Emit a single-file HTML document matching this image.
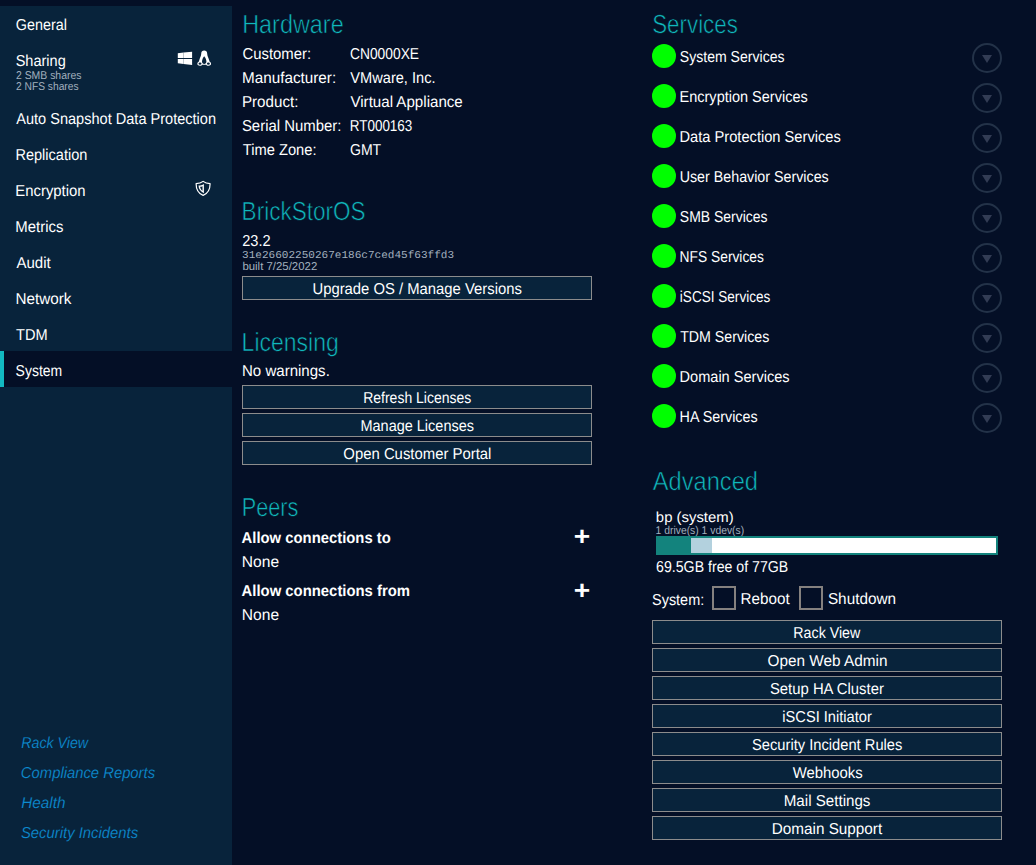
<!DOCTYPE html>
<html lang="en"><head><meta charset="utf-8"><title>BrickStor SP Manager - System</title>
<style>
html,body{margin:0;padding:0}
body{width:1036px;height:865px;background:#040f26;overflow:hidden;position:relative;font-family:'Liberation Sans', sans-serif;color:#ffffff}
nav,main,section,ul,li,h2,p,dl,dt,dd{display:block;margin:0;padding:0;position:static;list-style:none}
.t{position:absolute;left:0;top:0;display:block;text-rendering:geometricPrecision;line-height:1;white-space:pre;transform-origin:0 0;margin:0;padding:0;font-weight:400;font-style:normal;text-decoration:none}
.nav{color:#ffffff}
.sub{color:#a3b1bf}
.link{color:#0d8bd0;font-style:italic;-webkit-text-stroke:0.15px #08233b}
.h{color:#10b8be;-webkit-text-stroke:0.6px #040f26}
.txt{color:#ffffff}
.b{color:#ffffff;font-weight:700}
.plus{color:#ffffff;font-weight:700}
.mono{color:#a3b1bf;font-family:'Liberation Mono', monospace}
#side{position:absolute;left:0;top:6px;width:232px;height:859px;background:#08233b}
#sel{position:absolute;left:0;top:351px;width:232px;height:36px;background:#040f26}
#sel i{position:absolute;left:0;top:0;width:4px;height:36px;background:#12b9c1}
button.btn{position:absolute;box-sizing:border-box;height:24px;width:350px;margin:0;padding:0;border:1px solid #8c8c8c;border-radius:0;background:#08233b;font:inherit;color:inherit;overflow:visible;appearance:none;-webkit-appearance:none}
.dot{position:absolute;width:24px;height:24px;border-radius:50%;background:#00ff00}
.ddn{position:absolute;width:30px;height:30px;box-sizing:border-box;border:2px solid #233248;border-radius:50%}
.ddn i{position:absolute;left:8.2px;top:10px;width:0;height:0;border-left:5px solid transparent;border-right:5px solid transparent;border-top:8px solid #323c54}
.chk{position:absolute;width:24px;height:24px;box-sizing:border-box;border:2px solid #85817f;background:#040f26}
#bar{position:absolute;left:656px;top:536px;width:342px;height:19px;box-sizing:border-box;border:2px solid #13837d;background:#fff}
#bar b{position:absolute;left:0;top:0;height:15px;width:33px;background:#13837d}
#bar u{position:absolute;left:33px;top:0;height:15px;width:21px;background:#b3d1de}
svg{position:absolute;overflow:visible}
</style></head>
<body>
<nav>
<div id="side"></div>
<div id="sel"><i></i></div>
<svg id="icons" style="left:0;top:0" width="232" height="220" viewBox="0 0 232 220">
<g id="win" fill="#fff"><path d="M177.8 53.2 L183.55 52.6 V57.95 H177.8 Z"/><path d="M183.55 52.6 L192.1 51.8 V57.95 H183.55 Z"/><path d="M177.8 58.9 H183.55 V63.9 L177.8 63.2 Z"/><path d="M183.55 58.9 H192.1 V65 L183.55 63.95 Z"/></g>
<g id="tux"><path fill="#fff" d="M204.2 50.6 C206 50.6 207.2 51.8 207.2 53.8 C207.2 55.8 208.4 57.6 209.1 60 L209.5 61.6 C211.2 62.4 211.4 64.2 210.6 65 C209.6 66 207.4 65.9 206.6 65.2 L206.2 64.7 H202.2 L201.8 65.2 C201 65.9 198.8 66 197.8 65 C197 64.2 197.2 62.4 198.9 61.6 L199.3 60 C200 57.6 201.2 55.8 201.2 53.8 C201.2 51.8 202.4 50.6 204.2 50.6 Z"/>
<path fill="#08233b" d="M204.2 56.2 C205.5 57.5 206.4 59.8 206.4 61.6 C206.4 63.2 205.5 64.1 204.2 64.1 C202.9 64.1 202 63.2 202 61.6 C202 59.8 202.9 57.5 204.2 56.2 Z"/>
<ellipse fill="#08233b" cx="200" cy="63.7" rx="1.5" ry="1.1"/><ellipse fill="#08233b" cx="208.4" cy="63.7" rx="1.5" ry="1.1"/></g>
<g id="shield"><path fill="none" stroke="#fff" stroke-width="1.2" stroke-linejoin="round" d="M203.1 181.4 C204.9 182.9 207.7 183.7 210.1 183.7 C210.1 189.2 207.9 193.4 203.1 195.4 C198.3 193.4 196.1 189.2 196.1 183.7 C198.5 183.7 201.3 182.9 203.1 181.4 Z"/>
<path fill="#fff" fill-rule="evenodd" d="M203.9 184 V193.2 C200.6 191.6 198.6 189 198.5 185.6 C200.3 185.5 202.4 185 203.9 184 Z M202.5 186.2 C201.8 186.5 200.9 186.7 200.1 186.8 C200.3 188.4 201.1 189.8 202.5 190.8 Z"/></g>
</svg>
<ul>
<li><a class="t nav" href="#" style="font-size:15.8px;transform:translate(15.76px,18.05px) scaleX(0.9094)">General</a></li>
<li><a class="t nav" href="#" style="font-size:15.8px;transform:translate(15.65px,54.05px) scaleX(0.9194)">Sharing</a><span class="t sub" style="font-size:11.4px;transform:translate(15.98px,71.17px) scaleX(0.9146)">2 SMB shares</span><span class="t sub" style="font-size:11.4px;transform:translate(16.00px,82.17px) scaleX(0.8986)">2 NFS shares</span></li>
<li><a class="t nav" href="#" style="font-size:15.8px;transform:translate(16.26px,112.05px) scaleX(0.9209)">Auto Snapshot Data Protection</a></li>
<li><a class="t nav" href="#" style="font-size:15.8px;transform:translate(15.39px,148.05px) scaleX(0.9208)">Replication</a></li>
<li><a class="t nav" href="#" style="font-size:15.8px;transform:translate(15.30px,184.05px) scaleX(0.9415)">Encryption</a></li>
<li><a class="t nav" href="#" style="font-size:15.8px;transform:translate(15.30px,220.05px) scaleX(0.9443)">Metrics</a></li>
<li><a class="t nav" href="#" style="font-size:15.8px;transform:translate(16.45px,256.05px) scaleX(0.9518)">Audit</a></li>
<li><a class="t nav" href="#" style="font-size:15.8px;transform:translate(15.39px,292.05px) scaleX(0.9659)">Network</a></li>
<li><a class="t nav" href="#" style="font-size:15.8px;transform:translate(16.04px,328.05px) scaleX(0.9231)">TDM</a></li>
<li><a class="t nav" href="#" style="font-size:15.8px;transform:translate(15.61px,364.05px) scaleX(0.8852)">System</a></li>
</ul>
<ul>
<li><a class="t link" href="#" style="font-size:15.8px;transform:translate(21.29px,736.05px) scaleX(0.8983)">Rack View</a></li>
<li><a class="t link" href="#" style="font-size:15.8px;transform:translate(20.87px,766.05px) scaleX(0.9376)">Compliance Reports</a></li>
<li><a class="t link" href="#" style="font-size:15.8px;transform:translate(21.19px,796.05px) scaleX(0.9688)">Health</a></li>
<li><a class="t link" href="#" style="font-size:15.8px;transform:translate(20.95px,826.05px) scaleX(0.9397)">Security Incidents</a></li>
</ul>
</nav>
<main>
<section id="hardware"><h2 class="t h" style="font-size:26.2px;transform:translate(242.17px,11.00px) scaleX(0.8943)">Hardware</h2>
<dl>
<dt class="t txt" style="font-size:15.8px;transform:translate(242.48px,47.05px) scaleX(0.9416)">Customer:</dt><dd class="t txt" style="font-size:15.8px;transform:translate(349.99px,47.05px) scaleX(0.8742)">CN0000XE</dd>
<dt class="t txt" style="font-size:15.8px;transform:translate(241.95px,71.05px) scaleX(0.9670)">Manufacturer:</dt><dd class="t txt" style="font-size:15.8px;transform:translate(350.31px,71.05px) scaleX(0.9243)">VMware, Inc.</dd>
<dt class="t txt" style="font-size:15.8px;transform:translate(241.97px,95.05px) scaleX(0.9592)">Product:</dt><dd class="t txt" style="font-size:15.8px;transform:translate(350.43px,95.05px) scaleX(0.9570)">Virtual Appliance</dd>
<dt class="t txt" style="font-size:15.8px;transform:translate(241.92px,119.05px) scaleX(0.9443)">Serial Number:</dt><dd class="t txt" style="font-size:15.8px;transform:translate(349.68px,119.05px) scaleX(0.8528)">RT000163</dd>
<dt class="t txt" style="font-size:15.8px;transform:translate(242.75px,143.05px) scaleX(0.9297)">Time Zone:</dt><dd class="t txt" style="font-size:15.8px;transform:translate(349.95px,143.05px) scaleX(0.8909)">GMT</dd>
</dl></section>
<section id="os"><h2 class="t h" style="font-size:26.2px;transform:translate(241.59px,198.00px) scaleX(0.8608)">BrickStorOS</h2>
<p class="t txt" style="font-size:15.8px;transform:translate(242.19px,234.05px) scaleX(0.9225)">23.2</p><p class="t mono" style="font-size:10.6px;transform:translate(242.03px,251.21px) scaleX(1.0421)">31e26602250267e186c7ced45f63ffd3</p><p class="t sub" style="font-size:11.4px;transform:translate(242.40px,262.17px) scaleX(1.0012)">built 7/25/2022</p>
<button type="button" class="btn" style="left:242px;top:276px"><span class="t txt" style="font-size:15.8px;transform:translate(69.43px,5.05px) scaleX(0.9389)">Upgrade OS / Manage Versions</span></button></section>
<section id="licensing"><h2 class="t h" style="font-size:26.2px;transform:translate(241.61px,329.00px) scaleX(0.8785)">Licensing</h2><p class="t txt" style="font-size:15.8px;transform:translate(241.99px,364.05px) scaleX(0.9526)">No warnings.</p>
<button type="button" class="btn" style="left:242px;top:385px"><span class="t txt" style="font-size:15.8px;transform:translate(120.13px,5.05px) scaleX(0.8866)">Refresh Licenses</span></button>
<button type="button" class="btn" style="left:242px;top:413px"><span class="t txt" style="font-size:15.8px;transform:translate(117.46px,5.05px) scaleX(0.9167)">Manage Licenses</span></button>
<button type="button" class="btn" style="left:242px;top:441px"><span class="t txt" style="font-size:15.8px;transform:translate(100.33px,5.05px) scaleX(0.9422)">Open Customer Portal</span></button>
</section>
<section id="peers"><h2 class="t h" style="font-size:26.2px;transform:translate(241.72px,494.00px) scaleX(0.8293)">Peers</h2>
<p class="t b" style="font-size:15.8px;transform:translate(241.57px,531.00px) scaleX(0.9393)">Allow connections to</p><span class="t plus" style="font-size:26px;transform:translate(573.73px,522.91px) scaleX(1.0838)">+</span><p class="t txt" style="font-size:15.8px;transform:translate(241.85px,555.05px) scaleX(0.9861)">None</p>
<p class="t b" style="font-size:15.8px;transform:translate(241.57px,584.00px) scaleX(0.9410)">Allow connections from</p><span class="t plus" style="font-size:26px;transform:translate(573.73px,577.01px) scaleX(1.0838)">+</span><p class="t txt" style="font-size:15.8px;transform:translate(241.85px,608.05px) scaleX(0.9861)">None</p>
</section>
<section id="services"><h2 class="t h" style="font-size:26.2px;transform:translate(652.16px,11.00px) scaleX(0.8539)">Services</h2>
<ul>
<li><div class="dot" style="left:651.8px;top:44px"></div><span class="t txt" style="font-size:15.8px;transform:translate(679.77px,50.05px) scaleX(0.8910)">System Services</span><div class="ddn" style="left:972px;top:43px"><i></i></div></li>
<li><div class="dot" style="left:651.8px;top:84px"></div><span class="t txt" style="font-size:15.8px;transform:translate(679.55px,90.05px) scaleX(0.9182)">Encryption Services</span><div class="ddn" style="left:972px;top:83px"><i></i></div></li>
<li><div class="dot" style="left:651.8px;top:124px"></div><span class="t txt" style="font-size:15.8px;transform:translate(679.49px,130.05px) scaleX(0.9278)">Data Protection Services</span><div class="ddn" style="left:972px;top:123px"><i></i></div></li>
<li><div class="dot" style="left:651.8px;top:164px"></div><span class="t txt" style="font-size:15.8px;transform:translate(679.67px,170.05px) scaleX(0.9030)">User Behavior Services</span><div class="ddn" style="left:972px;top:163px"><i></i></div></li>
<li><div class="dot" style="left:651.8px;top:204px"></div><span class="t txt" style="font-size:15.8px;transform:translate(679.84px,210.05px) scaleX(0.8845)">SMB Services</span><div class="ddn" style="left:972px;top:203px"><i></i></div></li>
<li><div class="dot" style="left:651.8px;top:244px"></div><span class="t txt" style="font-size:15.8px;transform:translate(679.57px,250.05px) scaleX(0.8735)">NFS Services</span><div class="ddn" style="left:972px;top:243px"><i></i></div></li>
<li><div class="dot" style="left:651.8px;top:284px"></div><span class="t txt" style="font-size:15.8px;transform:translate(679.86px,290.05px) scaleX(0.8582)">iSCSI Services</span><div class="ddn" style="left:972px;top:283px"><i></i></div></li>
<li><div class="dot" style="left:651.8px;top:324px"></div><span class="t txt" style="font-size:15.8px;transform:translate(680.14px,330.05px) scaleX(0.8992)">TDM Services</span><div class="ddn" style="left:972px;top:323px"><i></i></div></li>
<li><div class="dot" style="left:651.8px;top:364px"></div><span class="t txt" style="font-size:15.8px;transform:translate(679.53px,370.05px) scaleX(0.9219)">Domain Services</span><div class="ddn" style="left:972px;top:363px"><i></i></div></li>
<li><div class="dot" style="left:651.8px;top:404px"></div><span class="t txt" style="font-size:15.8px;transform:translate(679.61px,410.05px) scaleX(0.9070)">HA Services</span><div class="ddn" style="left:972px;top:403px"><i></i></div></li>
</ul></section>
<section id="advanced"><h2 class="t h" style="font-size:26.2px;transform:translate(652.81px,468.00px) scaleX(0.9024)">Advanced</h2>
<p class="t txt" style="font-size:14.6px;transform:translate(655.86px,511.12px) scaleX(1.0205)">bp (system)</p><p class="t sub" style="font-size:11.4px;transform:translate(655.60px,526.17px) scaleX(0.9088)">1 drive(s) 1 vdev(s)</p>
<div id="bar"><b></b><u></u></div>
<p class="t txt" style="font-size:15.8px;transform:translate(656.07px,560.05px) scaleX(0.8962)">69.5GB free of 77GB</p>
<span class="t txt" style="font-size:15.8px;transform:translate(652.03px,593.05px) scaleX(0.9138)">System:</span><div class="chk" style="left:712px;top:586px"></div><span class="t txt" style="font-size:15.8px;transform:translate(740.61px,592.05px) scaleX(0.9618)">Reboot</span><div class="chk" style="left:799px;top:586px"></div><span class="t txt" style="font-size:15.8px;transform:translate(827.88px,592.05px) scaleX(0.9711)">Shutdown</span>
<button type="button" class="btn" style="left:652px;top:620px"><span class="t txt" style="font-size:15.8px;transform:translate(140.34px,5.05px) scaleX(0.9004)">Rack View</span></button>
<button type="button" class="btn" style="left:652px;top:648px"><span class="t txt" style="font-size:15.8px;transform:translate(114.55px,5.05px) scaleX(0.9703)">Open Web Admin</span></button>
<button type="button" class="btn" style="left:652px;top:676px"><span class="t txt" style="font-size:15.8px;transform:translate(116.95px,5.05px) scaleX(0.9401)">Setup HA Cluster</span></button>
<button type="button" class="btn" style="left:652px;top:704px"><span class="t txt" style="font-size:15.8px;transform:translate(129.35px,5.05px) scaleX(0.9260)">iSCSI Initiator</span></button>
<button type="button" class="btn" style="left:652px;top:732px"><span class="t txt" style="font-size:15.8px;transform:translate(98.99px,5.05px) scaleX(0.9309)">Security Incident Rules</span></button>
<button type="button" class="btn" style="left:652px;top:760px"><span class="t txt" style="font-size:15.8px;transform:translate(139.65px,5.05px) scaleX(0.9418)">Webhooks</span></button>
<button type="button" class="btn" style="left:652px;top:788px"><span class="t txt" style="font-size:15.8px;transform:translate(130.74px,5.05px) scaleX(0.9584)">Mail Settings</span></button>
<button type="button" class="btn" style="left:652px;top:816px"><span class="t txt" style="font-size:15.8px;transform:translate(118.72px,5.05px) scaleX(0.9677)">Domain Support</span></button>
</section>
</main>
</body></html>
